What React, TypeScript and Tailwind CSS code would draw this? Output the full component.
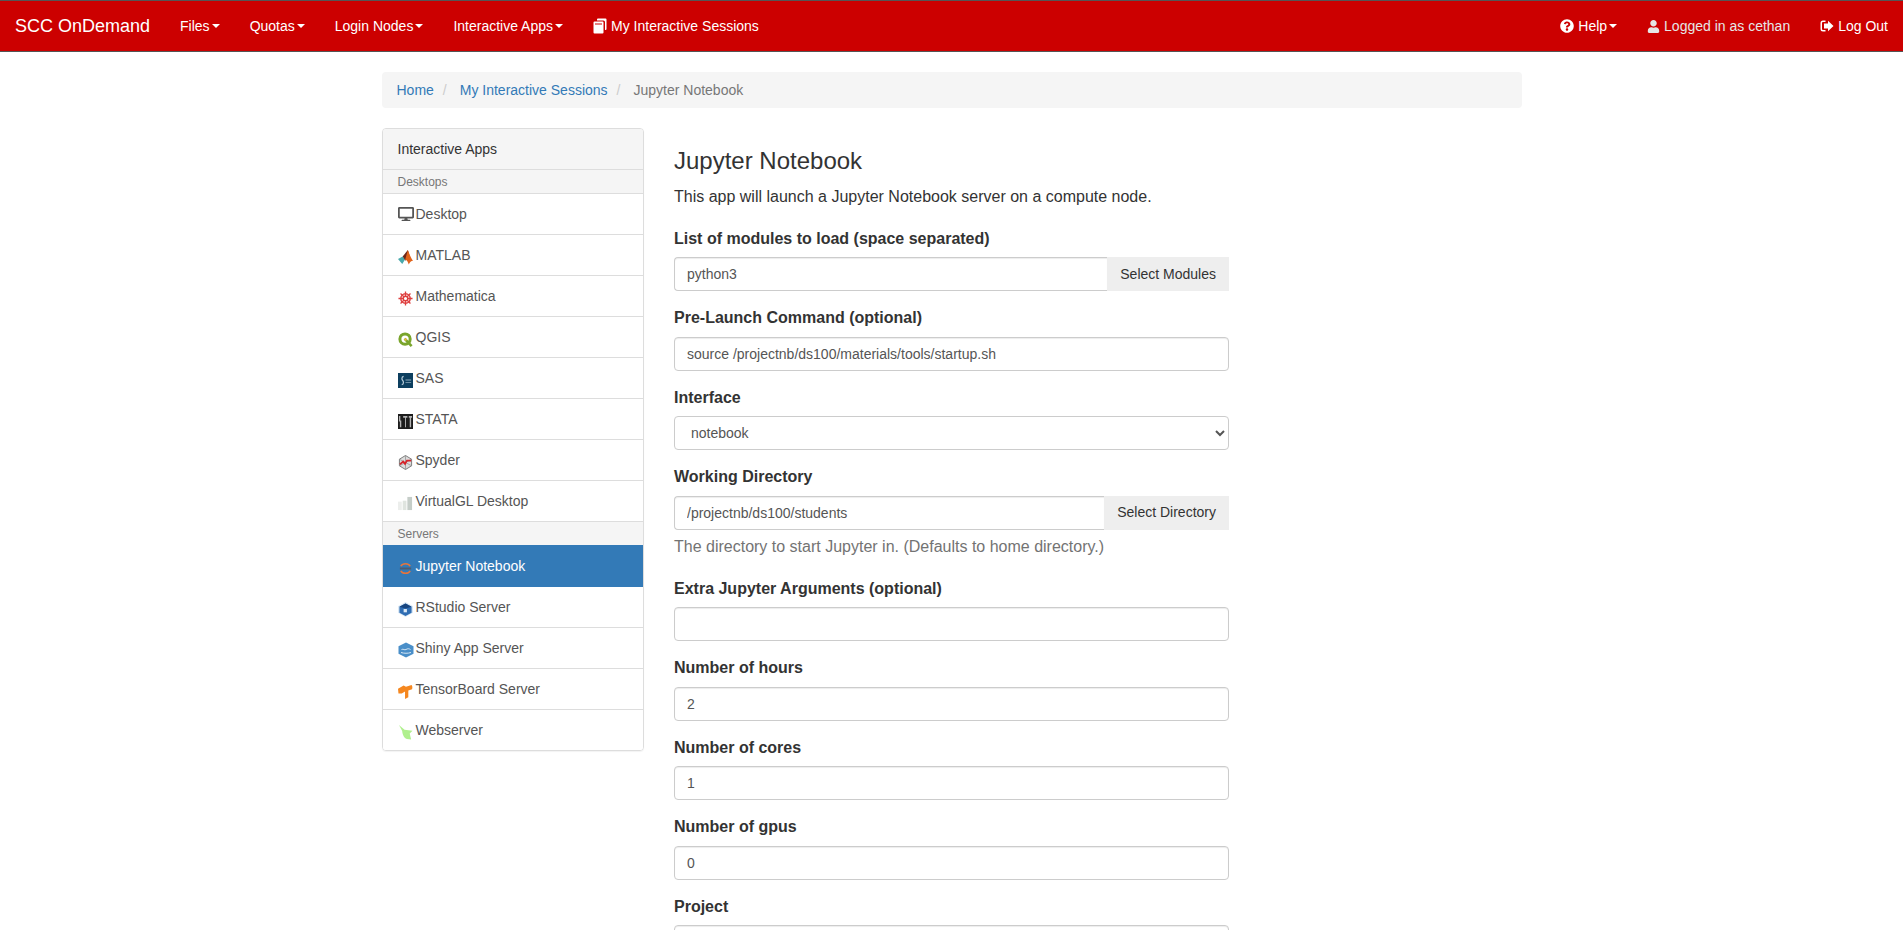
import type { ReactNode } from 'react';
import { FaDesktop, FaQuestionCircle, FaUser } from 'react-icons/fa';

const MatlabIcon = () => (
  <svg width="15" height="15" viewBox="0 0 16 16">
    <path d="M0 9.500l5-2.500 2.500 3-3 5z" fill="#49a9ac" />
    <path d="M5 7l5.500-7L12 5l-4 6.500z" fill="#6e2618" />
    <path d="M10.500 0c1.500 4 3 8 5.500 11.500-2 0-3.500 1.500-4.500 4-1-3-2.500-5.500-4-4.500z" fill="#e0621a" />
  </svg>
);

const MathematicaIcon = () => (
  <svg width="15" height="15" viewBox="0 0 16 16" fill="none" stroke="#de3f3f">
    <circle cx="8" cy="8" r="2.400" strokeWidth="1.500" />
    <circle cx="8" cy="8" r="5" strokeWidth="1.600" />
    <path d="M8 .5v5M8 10.500v5M.5 8h5M10.500 8h5M2.700 2.700l3.500 3.500M9.800 9.800l3.500 3.500M13.300 2.700L9.800 6.200M6.200 9.800l-3.500 3.500" strokeWidth="1.400" />
  </svg>
);

const QgisIcon = () => (
  <svg width="15" height="15" viewBox="0 0 16 16" fill="none">
    <circle cx="7.500" cy="7.500" r="5.500" stroke="#7aa52c" strokeWidth="3.200" />
    <path d="M7 7l7.500 8" stroke="#7aa52c" strokeWidth="2.800" />
    <circle cx="8" cy="8" r="1.300" fill="#eebc3f" />
  </svg>
);

const SasIcon = () => (
  <svg width="15" height="15" viewBox="0 0 16 16">
    <rect width="16" height="16" fill="#0d3f5f" />
    <path d="M6 3.500C3.500 4 4 7 5 8s1.500 4-1 4.500" stroke="#b8ccd8" strokeWidth="1.300" fill="none" />
    <path d="M8 7h6v1H8zM8 9.500h6v1H8z" fill="#8fa9ba" />
  </svg>
);

const StataIcon = () => (
  <svg width="15" height="15" viewBox="0 0 16 16">
    <rect width="16" height="16" fill="#1c1c1c" />
    <path d="M1 2h1.500v5h1v7H2V8H1zM5.500 2H10v2H8.500v10h-1V4h-2zM11.500 2H15v2h-1v10h-1.500V4h-1z" fill="#b4b4b4" />
  </svg>
);

const SpyderIcon = () => (
  <svg width="15" height="15" viewBox="0 0 16 16" fill="none">
    <path d="M8 .5l6.500 4v7L8 15.500l-6.500-4v-7z" fill="#dcdcdc" stroke="#777" />
    <path d="M8 .5v15M1.500 4.500l13 7M14.500 4.500l-13 7" stroke="#888" strokeWidth=".7" />
    <path d="M2 10l3.500-3 2 2.500 2-3.500 4.500 0" stroke="#d8232a" strokeWidth="1.900" />
  </svg>
);

const VirtualGlIcon = () => (
  <svg width="15" height="15" viewBox="0 0 16 16">
    <rect x="0" y="6" width="4" height="9" fill="#eceeec" />
    <rect x="5" y="5" width="4" height="10" fill="#dfe4df" />
    <rect x="10" y="1" width="5" height="14" fill="#c5cdc8" />
  </svg>
);

const JupyterIcon = () => (
  <svg width="15" height="15" viewBox="0 0 16 16" fill="none">
    <path d="M3 5.500c2-3.500 8-3.500 10 0" stroke="#e8753a" strokeWidth="1.600" />
    <path d="M3 10.500c2 3.500 8 3.500 10 0" stroke="#e8753a" strokeWidth="1.600" />
    <rect x="2" y="7" width="12" height="2" fill="#4f5b70" />
  </svg>
);

const RStudioIcon = () => (
  <svg width="15" height="15" viewBox="0 0 16 16">
    <path d="M8 0l8 4.500v7L8 16l-8-4.500v-7z" fill="#d9e8f5" />
    <path d="M8 1.500l6.500 3.500v6.500L8 15l-6.500-3.500V5z" fill="#2f6db3" />
    <path d="M1.500 5L8 1.500 14.500 5 8 7z" fill="#17457f" />
    <rect x="6" y="7.500" width="3.500" height="3.500" fill="#dce9f5" />
  </svg>
);

const ShinyIcon = () => (
  <svg width="16" height="16" viewBox="0 0 16 16">
    <path d="M8 .5l7.500 3.800v7.400L8 15.500.5 11.700V4.300z" fill="#4a8fc9" />
    <path d="M3.500 7.500c2-1 3 1 4.500 0s3-1 4.500 0M3 10.500c3 1 7 1 10 0" stroke="#d5e6f4" strokeWidth="1" fill="none" />
  </svg>
);

const TensorBoardIcon = () => (
  <svg width="15" height="15" viewBox="0 0 16 16">
    <path d="M0 5l6-3.500 2.500 1.500L14.500 1c1 1.500 1 3 .5 4.500L11 7v7l-3.500 2V8L4 10H.5z" fill="#f5871f" />
  </svg>
);

const WebserverIcon = () => (
  <svg width="15" height="15" viewBox="0 0 16 16">
    <path d="M1 0l6 5 8.500 1-3 3 1.500 6.500-4.500-.5C6 14 4.500 9 4.500 6.500z" fill="#b0f08e" />
  </svg>
);

const SessionsIcon = () => (
  <svg width="14" height="16" viewBox="0 0 14 16" fill="white">
    <path d="M4 1.500a1 1 0 0 1 1-1h7.500a1 1 0 0 1 1 1V11a1 1 0 0 1-1 1H12V4a1.500 1.500 0 0 0-1.500-1.500H4z" />
    <path fillRule="evenodd" d="M1.500 3.500h8A1 1 0 0 1 10.500 4.500v10a1 1 0 0 1-1 1h-8a1 1 0 0 1-1-1v-10a1 1 0 0 1 1-1zM2 5.500v1h7v-1z" />
  </svg>
);

const SignOutIcon = () => (
  <svg width="14" height="14" viewBox="0 0 14 14" fill="white">
    <path d="M5.500 1.500H3A2.500 2.500 0 0 0 .5 4v6A2.500 2.500 0 0 0 3 12.500h2.500V11H3a1 1 0 0 1-1-1V4a1 1 0 0 1 1-1h2.500z" />
    <path d="M8 1.800L13.500 7 8 12.200V9.500H4v-5h4z" />
  </svg>
);

const Caret = () => (
  <span className="ml-0.5 inline-block h-0 w-0 border-x-4 border-t-4 border-x-transparent border-t-white align-middle" />
);

const NavLink = ({ children, className = 'text-white' }: { children: ReactNode; className?: string }) => (
  <a className={`flex items-center px-[15px] text-[14px] ${className}`}>{children}</a>
);

const FieldLabel = ({ children }: { children: ReactNode }) => (
  <label className="mb-[7.5px] block text-[16px] leading-[23px] font-bold text-[#333]">{children}</label>
);

const Field = ({ label, value, help, action }: { label: string; value?: string; help?: string; action?: string }) => (
  <div className="mb-[15px]">
    <FieldLabel>{label}</FieldLabel>
    {action ? (
      <div className="flex">
        <input
          readOnly
          value={value ?? ''}
          className="h-[34px] min-w-0 flex-1 rounded-l border border-r-0 border-[#ccc] px-3 text-[14px] text-[#555] shadow-[inset_0_1px_1px_rgba(0,0,0,0.075)]"
        />
        <button className="h-[34px] bg-[#eee] px-[13px] text-[14px] text-[#333]">{action}</button>
      </div>
    ) : (
      <input
        readOnly
        value={value ?? ''}
        className="block h-[34px] w-full rounded border border-[#ccc] px-3 text-[14px] text-[#555] shadow-[inset_0_1px_1px_rgba(0,0,0,0.075)]"
      />
    )}
    {help && <p className="mt-[5px] mb-[19px] text-[16px] leading-[23px] text-[#737373]">{help}</p>}
  </div>
);

const desktops = [
  { name: 'Desktop', icon: <FaDesktop className="h-4 w-4 text-[#555]" />, plain: true },
  { name: 'MATLAB', icon: <MatlabIcon /> },
  { name: 'Mathematica', icon: <MathematicaIcon /> },
  { name: 'QGIS', icon: <QgisIcon /> },
  { name: 'SAS', icon: <SasIcon /> },
  { name: 'STATA', icon: <StataIcon /> },
  { name: 'Spyder', icon: <SpyderIcon /> },
  { name: 'VirtualGL Desktop', icon: <VirtualGlIcon /> },
];

const servers = [
  { name: 'Jupyter Notebook', icon: <JupyterIcon />, active: true },
  { name: 'RStudio Server', icon: <RStudioIcon /> },
  { name: 'Shiny App Server', icon: <ShinyIcon /> },
  { name: 'TensorBoard Server', icon: <TensorBoardIcon /> },
  { name: 'Webserver', icon: <WebserverIcon /> },
];

const AppRow = ({ name, icon, active, plain }: { name: string; icon: ReactNode; active?: boolean; plain?: boolean }) => (
  <a
    className={`flex items-center gap-[2px] border-t px-[15px] text-[14px] ${
      active
        ? 'relative z-10 mb-[-1px] h-[42px] border-[#337ab7] bg-[#337ab7] text-white'
        : 'h-[41px] border-[#ddd] bg-white text-[#555]'
    }`}
  >
    {plain ? (
      icon
    ) : (
      <span className="flex h-4 w-4 translate-y-[2px] items-center justify-center blur-[0.3px]">{icon}</span>
    )}
    {name}
  </a>
);

const GroupHeading = ({ children }: { children: ReactNode }) => (
  <div className="flex h-[24px] items-center border-t border-[#ddd] bg-[#f5f5f5] px-[15px] text-[12px] text-[#777]">
    {children}
  </div>
);

export default function App() {
  return (
    <div className="h-screen overflow-hidden bg-white font-['Liberation_Sans',Arial,sans-serif] text-[14px] text-[#333]">
      <nav className="flex h-[52px] border-y border-[#555] bg-[#c00]">
        <a className="flex items-center px-[15px] text-[18px] text-white">SCC OnDemand</a>
        <NavLink>Files<Caret /></NavLink>
        <NavLink>Quotas<Caret /></NavLink>
        <NavLink>Login Nodes<Caret /></NavLink>
        <NavLink>Interactive Apps<Caret /></NavLink>
        <NavLink><span className="mr-1"><SessionsIcon /></span>My Interactive Sessions</NavLink>
        <div className="ml-auto flex">
          <NavLink><FaQuestionCircle className="mr-1 h-[14px] w-[14px]" />Help<Caret /></NavLink>
          <NavLink className="text-[#e6e6e6]"><FaUser className="mr-1 h-[13px] w-[13px]" />Logged in as cethan</NavLink>
          <NavLink><span className="mr-1"><SignOutIcon /></span>Log Out</NavLink>
        </div>
      </nav>

      <div className="mx-auto w-[1170px] px-[15px]">
        <ol className="mt-5 mb-5 flex h-9 items-center rounded bg-[#f5f5f5] px-[15px] text-[14px]">
          <li><a className="text-[#337ab7]">Home</a></li>
          <li className="pr-[13px] pl-[9px] text-[#ccc]">/</li>
          <li><a className="text-[#337ab7]">My Interactive Sessions</a></li>
          <li className="pr-[13px] pl-[9px] text-[#ccc]">/</li>
          <li className="text-[#777]">Jupyter Notebook</li>
        </ol>

        <div className="flex gap-[30px]">
          <aside className="w-[262.5px] shrink-0">
            <div className="overflow-hidden rounded border border-[#ddd] shadow-[0_1px_1px_rgba(0,0,0,0.05)]">
              <div className="flex h-[40px] items-center bg-[#f5f5f5] px-[15px] text-[14px] text-[#333]">Interactive Apps</div>
              <GroupHeading>Desktops</GroupHeading>
              {desktops.map((app) => <AppRow key={app.name} {...app} />)}
              <GroupHeading>Servers</GroupHeading>
              {servers.map((app) => <AppRow key={app.name} {...app} />)}
            </div>
          </aside>

          <main className="w-[555px]">
            <h3 className="mt-5 mb-[11px] text-[24px] leading-[26px] font-medium text-[#333]">Jupyter Notebook</h3>
            <p className="mb-[18.5px] text-[16px] leading-[23px] text-[#333]">This app will launch a Jupyter Notebook server on a compute node.</p>
            <Field label="List of modules to load (space separated)" value="python3" action="Select Modules" />
            <Field label="Pre-Launch Command (optional)" value="source /projectnb/ds100/materials/tools/startup.sh" />
            <div className="mb-[15px]">
              <FieldLabel>Interface</FieldLabel>
              <select className="block h-[34px] w-full rounded border border-[#ccc] bg-white px-3 text-[14px] text-[#555]">
                <option>notebook</option>
              </select>
            </div>
            <Field
              label="Working Directory"
              value="/projectnb/ds100/students"
              action="Select Directory"
              help="The directory to start Jupyter in. (Defaults to home directory.)"
            />
            <Field label="Extra Jupyter Arguments (optional)" />
            <Field label="Number of hours" value="2" />
            <Field label="Number of cores" value="1" />
            <Field label="Number of gpus" value="0" />
            <Field label="Project" />
          </main>
        </div>
      </div>
    </div>
  );
}
